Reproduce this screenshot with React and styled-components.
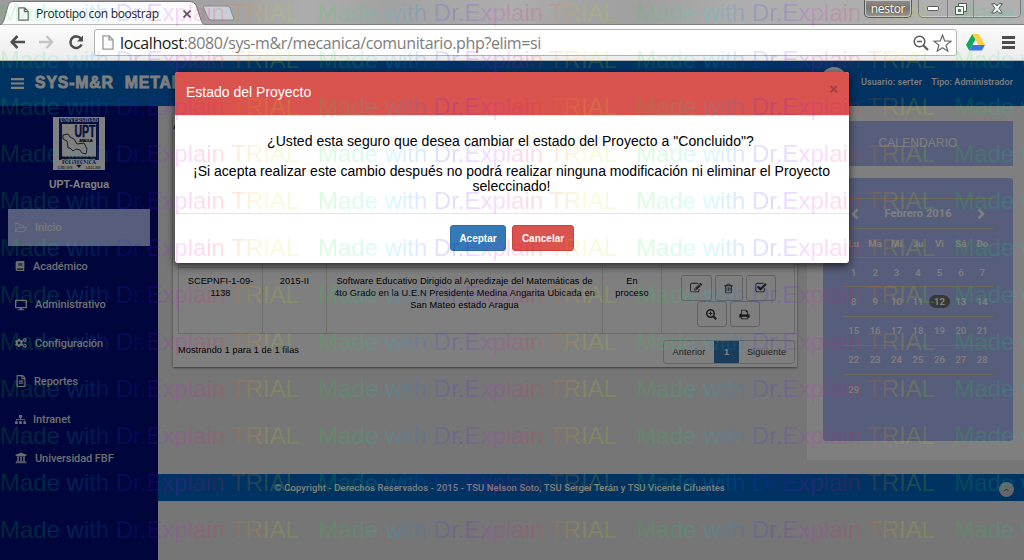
import React from "react";
import styled, { createGlobalStyle } from "styled-components";
import { FaBook, FaDesktop, FaCogs, FaRegFileAlt, FaSitemap, FaUniversity } from "react-icons/fa";

const Global = createGlobalStyle`
  * { box-sizing: border-box; }
  body { margin: 0; overflow: hidden; font-family: "Liberation Sans", Arial, sans-serif; }
  svg { display: block; flex: none; }
`;

const Page = styled.div`
  position: relative;
  width: 1024px;
  height: 560px;
  display: flex;
  flex-direction: column;
  overflow: hidden;
`;

/* ---------- browser chrome ---------- */
const TabStrip = styled.div`
  height: 25px;
  flex: none;
  display: flex;
  align-items: flex-start;
  justify-content: space-between;
  background: linear-gradient(100deg, #9c9c9c 0%, #a4a4a4 24%, #acacac 30%, #a2a2a2 38%, #adadad 50%, #a3a3a3 56%, #a0a0a0 63%, #adadad 72%, #b0b0b0 100%);
  border-bottom: 1px solid #7d7d7d;
`;
const Tabs = styled.div`
  position: relative;
  display: flex;
  height: 25px;
`;
const TabShape = styled.svg`
  position: absolute;
  left: 0;
  top: 0;
`;
const TabLabel = styled.div`
  position: relative;
  display: flex;
  align-items: center;
  width: 205px;
  height: 25px;
  padding: 2px 0 0 18px;
  font: 12px "Open Sans", sans-serif;
  letter-spacing: -0.33px;
  color: #222;
  span { flex: 1; margin-left: 7px; white-space: nowrap; }
  svg:last-child { margin-right: 14px; }
`;
const WindowControls = styled.div`
  display: flex;
  gap: 6px;
  padding-right: 3px;
`;
const UserBadge = styled.div`
  width: 48px;
  height: 18px;
  border: 1px solid #555;
  border-top: 0;
  border-radius: 0 0 5px 5px;
  background: linear-gradient(#8c8c8c, #777 50%, #999);
  box-shadow: inset 0 0 0 1px #c4c4c4;
  color: #fff;
  text-align: center;
  font: 12px/18px "Open Sans", sans-serif;
  letter-spacing: -0.3px;
  text-shadow: 0 0 2px #333;
`;
const ControlGroup = styled.div`
  display: flex;
  width: 103px;
  height: 18px;
  border: 1px solid #7b7b7b;
  border-top: 0;
  border-radius: 0 0 5px 5px;
  box-shadow: inset 0 -1px 0 #ccc;
`;
const Control = styled.div`
  width: ${(p) => p.$w}px;
  display: flex;
  align-items: center;
  justify-content: center;
  & + & { border-left: 1px solid #858585; }
`;
const Toolbar = styled.div`
  height: 36px;
  flex: none;
  display: flex;
  align-items: center;
  padding: 0 8px 0 10px;
  background: linear-gradient(#fbfbfb, #ececec);
  border-bottom: 1px solid #b5b5b5;
`;
const NavIcons = styled.div`
  display: flex;
  gap: 14px;
  width: 84px;
`;
const AddressBar = styled.div`
  display: flex;
  align-items: center;
  width: 863px;
  height: 27px;
  padding: 0 4px 0 7px;
  border: 1px solid #b3b3b3;
  border-radius: 3px;
  background: #fff;
`;
const Url = styled.div`
  flex: 1;
  margin-left: 6px;
  font: 16px/24px "Open Sans", sans-serif;
  letter-spacing: -0.37px;
  color: #7d7d7d;
  b { font-weight: 400; color: #1a1a1a; }
`;
const AddressActions = styled.div`
  display: flex;
  gap: 4px;
  align-items: center;
`;
const Extensions = styled.div`
  display: flex;
  align-items: center;
  justify-content: space-between;
  width: 49px;
  margin-left: 9px;
`;

/* ---------- site ---------- */
const Site = styled.div`
  position: relative;
  flex: 1;
  display: flex;
  flex-direction: column;
  background: #ececec;
`;
const SiteHeader = styled.header`
  height: 45px;
  flex: none;
  display: flex;
  align-items: center;
  padding: 0 11px;
  background: #0064c4;
  color: #fff;
`;
const Brand = styled.div`
  flex: 1;
  display: flex;
  gap: 11px;
  margin: -1px 0 0 11px;
  font: 900 15.8px "Liberation Sans", Arial, sans-serif;
  letter-spacing: 0.85px;
  -webkit-text-stroke: 0.8px #fff;
`;
const Avatar = styled.div`
  width: 26px;
  height: 26px;
  border-radius: 50%;
  background: #fff;
  margin: 0 14px 7px 0;
`;
const UserInfo = styled.div`
  display: flex;
  justify-content: space-between;
  width: 152px;
  margin-top: -3px;
  font: 500 9px Roboto, sans-serif;
  letter-spacing: 0.1px;
  white-space: nowrap;
`;
const SiteBody = styled.div`
  flex: 1;
  display: flex;
  min-height: 0;
`;
const Sidebar = styled.aside`
  width: 158px;
  padding: 11px 8px;
  background: #000c78;
`;
const Institution = styled.div`
  display: flex;
  flex-direction: column;
  align-items: center;
  height: 92px;
  gap: 8px;
  color: #fff;
  font: 700 10.5px "Liberation Sans", Arial, sans-serif;
`;
const MenuItem = styled.div`
  display: flex;
  align-items: center;
  gap: ${(p) => p.$gap}px;
  height: 37px;
  margin-bottom: 1.35px;
  padding: ${(p) => (p.$active ? 0 : 1)}px 0 0 7px;
  background: ${(p) => (p.$active ? "#aebcf6" : "transparent")};
  color: ${(p) => (p.$active ? "#f4f4f4" : "#dcdcdc")};
  font: 500 11px Roboto, sans-serif;
  letter-spacing: -0.08px;
`;
const Main = styled.div`
  flex: 1;
  display: flex;
  flex-direction: column;
`;
const Columns = styled.div`
  height: 368px;
  display: flex;
  align-items: flex-start;
  justify-content: space-between;
  padding-left: 15px;
`;
const Card = styled.section`
  width: 624px;
  height: 253px;
  margin-top: 8px;
  padding: 0 2px 0 5px;
  background: #fff;
  box-shadow: 0 1px 2px rgba(0, 0, 0, 0.5);
`;
const CardTitle = styled.h2`
  height: 23px;
  margin: 0 0 0 -5px;
  font: 15px/20px "Liberation Sans", Arial, sans-serif;
  color: #205090;
`;
const CardBar = styled.div`
  height: 25px;
  margin: 0 -2px 0 -3px;
  background: #aebcf6;
`;
const Table = styled.div`
  display: grid;
  grid-template-columns: 84px 64px 276px 59px 132px;
  grid-template-rows: 14px 66px;
  width: 617px;
  margin-top: 91px;
  border: solid #d4d4d4;
  border-width: 0 1px 1px 1px;
`;
const Cell = styled.div`
  padding: 7px 4px 0;
  border-top: 1px solid #d4d4d4;
  border-right: 1px solid #d8d8d8;
  text-align: center;
  font: 9.2px/12px "Liberation Sans", Arial, sans-serif;
  letter-spacing: 0.1px;
  color: #000;
  white-space: pre-line;
  &:nth-child(5n) { border-right: 0; }
`;
const Actions = styled.div`
  display: flex;
  flex-wrap: wrap;
  justify-content: center;
  gap: 0 3px;
  width: 97px;
  margin: 0 auto;
`;
const ActionButton = styled.span`
  display: flex;
  align-items: center;
  justify-content: center;
  width: ${(p) => p.$w}px;
  height: 26px;
  border: 1px solid #c4c4c4;
  border-radius: 3px;
  color: #333;
`;
const TableFooter = styled.div`
  display: flex;
  justify-content: space-between;
  padding-top: 5px;
  font: 9.2px/22px "Liberation Sans", Arial, sans-serif;
  letter-spacing: 0.07px;
  color: #000;
`;
const Pager = styled.div`
  display: flex;
  height: 24px;
  border: 1px solid #ccc;
  border-radius: 3px;
  color: #444;
  font-size: 9.2px;
  line-height: 23px;
  letter-spacing: 0.1px;
  margin-top: 1px;
`;
const PageLink = styled.span`
  width: ${(p) => p.$w}px;
  text-align: center;
  ${(p) => p.$on && "background:#337ab7;color:#fff;font-weight:700;"}
`;
const Aside = styled.aside`
  width: 217px;
  height: 354px;
  padding: 15px 11px 0 16px;
  background: #fff;
`;
const AsideTitle = styled.div`
  height: 45px;
  margin-bottom: 12px;
  background: #aebcf6;
  color: #fff;
  text-align: center;
  font: 12px/44px "Liberation Sans", Arial, sans-serif;
  letter-spacing: 0.1px;
`;
const Calendar = styled.div`
  height: 263px;
  padding: 20px 20px 0;
  border-radius: 3px;
  background: #aebcf6;
  color: #fff;
`;
const MonthRow = styled.div`
  display: flex;
  align-items: center;
  justify-content: space-between;
  height: 30px;
  padding: 0 8px;
  border-top: 1px solid #d8d0b8;
  font: 700 11px Roboto, sans-serif;
  letter-spacing: 0.1px;
`;
const Week = styled.div`
  display: grid;
  grid-template-columns: repeat(7, 1fr);
  align-items: center;
  height: 29.2px;
  border-top: 1px solid #d8d0b8;
  text-align: center;
  font: ${(p) => (p.$head ? 700 : 500)} 9.6px Roboto, sans-serif;
`;
const Day = styled.span`
  margin: 0 ${(p) => (p.$today ? 0 : -2)}px;
  line-height: 13px;
  ${(p) => p.$today && "background:#707070;border-radius:7px;font-weight:700;"}
`;
const Footer = styled.footer`
  display: flex;
  align-items: center;
  height: 27px;
  padding-right: 10px;
  background: #0064c4;
  color: #fff;
  font: 500 9.4px Roboto, sans-serif;
  letter-spacing: 0.14px;
  span { flex: 1; text-align: center; padding-right: 158px; }
`;
const ToTop = styled.div`
  display: flex;
  align-items: center;
  justify-content: center;
  width: 15px;
  height: 15px;
  margin-top: 4px;
  border-radius: 50%;
  background: #c9c9d2;
`;

/* ---------- dialog ---------- */
const Backdrop = styled.div`
  position: absolute;
  inset: 0;
  background: rgba(0, 0, 0, 0.5);
`;
const Dialog = styled.div`
  position: absolute;
  left: 175px;
  top: 11px;
  width: 674px;
  height: 191px;
  display: flex;
  flex-direction: column;
  border-radius: 3px;
  background: #fff;
  box-shadow: 0 3px 9px rgba(0, 0, 0, 0.7);
  overflow: hidden;
`;
const DialogHeader = styled.div`
  display: flex;
  align-items: center;
  justify-content: space-between;
  height: 44px;
  padding: 0 11px 4px;
  background: #d9534f;
  border-bottom: 1px solid #e5e5e5;
  color: #fff;
  font-size: 14px;
`;
const Close = styled.span`
  margin-top: -7px;
  color: #a03d3a;
  font-weight: 700;
  font-size: 15px;
`;
const DialogBody = styled.div`
  height: 98px;
  padding: 18px 15px 0;
  border-bottom: 1px solid #e5e5e5;
  text-align: center;
  font-size: 14px;
  line-height: 15px;
  letter-spacing: 0.02px;
  color: #000;
  p { margin: 0 0 15px -1px; white-space: pre-line; }
  p:first-child { letter-spacing: 0.05px; margin-left: -3px; }
`;
const DialogFooter = styled.div`
  display: flex;
  justify-content: center;
  gap: 6px;
  padding-top: 11px;
`;
const Button = styled.button`
  width: ${(p) => p.$w}px;
  height: 26px;
  padding: 0;
  border: 1px solid ${(p) => p.$edge};
  border-radius: 3px;
  background: ${(p) => p.$bg};
  color: #fff;
  font: 700 10px "Liberation Sans", Arial, sans-serif;
`;

/* ---------- trial watermark ---------- */
const Watermark = styled.div`
  position: absolute;
  inset: 0;
  overflow: hidden;
  pointer-events: none;
  opacity: 0.14;
`;
const WatermarkLine = styled.div`
  width: 1272px;
  height: 47px;
  font: 24px/26px "Liberation Sans", Arial, sans-serif;
  letter-spacing: -0.025px;
  white-space: pre;
  color: transparent;
  background: repeating-linear-gradient(90deg, #00f020 0px, #00f050 30px, #00e8f0 66px, #0080ff 100px, #4000ff 140px, #e000ff 175px, #ff0050 215px, #ff7000 238px, #ffd800 265px, #80f800 298px, #00f020 318px);
  -webkit-background-clip: text;
  background-clip: text;
`;

const paths = {
  edit: "M888 1184l116-116-152-152-116 116v56h96v96h56zm440-720q-16-16-33 1l-350 350q-17 17-1 33t33-1l350-350q17-17 1-33zm80 594v190q0 119-84.5 203.5t-203.5 84.5h-832q-119 0-203.5-84.5t-84.5-203.5v-832q0-119 84.5-203.5t203.5-84.5h832q63 0 117 25 15 7 18 23 3 17-9 29l-49 49q-14 14-32 8-23-6-45-6h-832q-66 0-113 47t-47 113v832q0 66 47 113t113 47h832q66 0 113-47t47-113v-126q0-13 9-22l64-64q15-15 35-7t20 29zm-96-738l288 288-672 672h-288v-288zm444 132l-92 92-288-288 92-92q28-28 68-28t68 28l152 152q28 28 28 68t-28 68z",
  trash: "M704 736v576q0 14-9 23t-23 9h-64q-14 0-23-9t-9-23v-576q0-14 9-23t23-9h64q14 0 23 9t9 23zm256 0v576q0 14-9 23t-23 9h-64q-14 0-23-9t-9-23v-576q0-14 9-23t23-9h64q14 0 23 9t9 23zm256 0v576q0 14-9 23t-23 9h-64q-14 0-23-9t-9-23v-576q0-14 9-23t23-9h64q14 0 23 9t9 23zm128 724v-948h-896v948q0 22 7 40.5t14.5 27 10.5 8.5h832q3 0 10.5-8.5t14.5-27 7-40.5zm-672-1076h448l-48-117q-7-9-17-11h-317q-10 2-17 11zm928 32v64q0 14-9 23t-23 9h-96v948q0 83-47 143.5t-113 60.5h-832q-66 0-113-58.5t-47-141.5v-952h-96q-14 0-23-9t-9-23v-64q0-14 9-23t23-9h309l70-167q15-37 54-63t79-26h320q40 0 79 26t54 63l70 167h309q14 0 23 9t9 23z",
  check: "M1472 930v318q0 119-84.5 203.5t-203.5 84.5h-832q-119 0-203.5-84.5t-84.5-203.5v-832q0-119 84.5-203.5t203.5-84.5h832q63 0 117 25 15 7 18 23 3 17-9 29l-49 49q-10 10-23 10-3 0-9-2-23-6-45-6h-832q-66 0-113 47t-47 113v832q0 66 47 113t113 47h832q66 0 113-47t47-113v-254q0-13 9-22l64-64q10-10 23-10 6 0 12 3 20 8 20 29zm231-489l-814 814q-24 24-57 24t-57-24l-430-430q-24-24-24-57t24-57l110-110q24-24 57-24t57 24l263 263 647-647q24-24 57-24t57 24l110 110q24 24 24 57t-24 57z",
  print: "M448 1536h896v-256h-896v256zm0-640h896v-384h-160q-40 0-68-28t-28-68v-160h-640v640zm1152 64q0-26-19-45t-45-19-45 19-19 45 19 45 45 19 45-19 19-45zm128 0v416q0 13-9.5 22.5t-22.5 9.5h-224v160q0 40-28 68t-68 28h-960q-40 0-68-28t-28-68v-160h-224q-13 0-22.5-9.5t-9.5-22.5v-416q0-79 56.5-135.5t135.5-56.5h64v-544q0-40 28-68t68-28h672q40 0 88 20t76 48l152 152q28 28 48 76t20 88v256h64q79 0 135.5 56.5t56.5 135.5z",
  folder: "M1717 931q0-35-53-35h-1088q-40 0-85.5 21.5t-71.5 52.5l-294 363q-18 24-18 40 0 35 53 35h1088q40 0 86-22t71-53l294-363q18-22 18-39zm-1141-163h768v-160q0-40-28-68t-68-28h-576q-40 0-68-28t-28-68v-64q0-40-28-68t-68-28h-320q-40 0-68 28t-28 68v853l256-315q44-53 116-87.5t140-34.5zm1269 163q0 62-46 120l-295 363q-43 53-116 87.5t-140 34.5h-1088q-92 0-158-66t-66-158v-960q0-92 66-158t158-66h320q92 0 158 66t66 158v32h544q92 0 158 66t66 158v160h192q54 0 99 24.5t67 70.5q15 32 15 68z",
};
const Glyph = ({ name, size = 12, box = 1792 }) => (
  <svg width={size} height={size} viewBox={`0 0 ${box} 1792`} fill="currentColor">
    <path d={paths[name]} />
  </svg>
);
const ZoomPlus = () => (
  <svg width="11" height="11" viewBox="0 0 11 11" fill="none" stroke="currentColor" strokeWidth="1.5">
    <circle cx="4.5" cy="4.5" r="3.7" />
    <path d="M7.3 7.3L10.2 10.2" strokeWidth="2" />
    <path d="M4.5 2.7V6.3M2.7 4.5H6.3" strokeWidth="1.1" />
  </svg>
);
const Chevron = ({ d }) => (
  <svg width="8" height="12" viewBox="0 0 8 12" fill="none" stroke="currentColor" strokeWidth="2.6"><path d={d} /></svg>
);
const PageGlyph = ({ w, h, color }) => (
  <svg width={w} height={h} viewBox="0 0 11 14" fill="#fafafa" stroke={color} strokeWidth="1.2">
    <path d="M.8 .8H6.6L10.2 4.4V13.2H.8ZM6.4 .8V4.6H10.2" />
  </svg>
);
const Logo = () => (
  <svg width="52" height="53" viewBox="0 0 52 53">
    <rect width="52" height="53" fill="#fff" />
    <path d="M6 1H46V43H33L26 51L19 43H6Z" fill="#13247c" />
    <rect x="9" y="7" width="34" height="33" fill="#fff" />
    <g fontFamily="Liberation Serif, serif" fontWeight="700" textAnchor="middle">
      <text x="26" y="5.4" fontSize="5.6" textLength="38" fill="#fff">UNIVERSIDAD</text>
      <text x="26" y="47" fontSize="5.6" textLength="34" fill="#13247c" stroke="#fff" strokeWidth="1.6" paintOrder="stroke">POLITECNICA</text>
      <text x="12" y="52" fontSize="3.6" textLength="15" lengthAdjust="spacingAndGlyphs" fill="#333">12 DIC 1976</text>
      <text x="40" y="52" fontSize="3.6" textLength="15" lengthAdjust="spacingAndGlyphs" fill="#333">A.B.I.L 2010</text>
    </g>
    <text x="32" y="20" fontFamily="Liberation Sans, sans-serif" fontWeight="700" fontSize="16" textLength="21" lengthAdjust="spacingAndGlyphs" textAnchor="middle" fill="#13247c" stroke="#13247c" strokeWidth=".5">UPT</text>
    <text x="33" y="25" fontFamily="Liberation Sans, sans-serif" fontWeight="700" fontSize="4" textLength="14" textAnchor="middle">ARAGUA</text>
    <path d="M10 18L15 17L17 20L21 22L24 27L31 26L34 32L33 37L29 36L27 33L23 32L20 34L17 31L15 31L14 24L10 22Z" fill="#fff" stroke="#222" strokeWidth=".9" />
    <path d="M9 40.5H43" stroke="#222" strokeWidth="2.2" strokeDasharray="3 .7" />
  </svg>
);

const menu = [
  ["Inicio", <Glyph name="folder" size={12} box={1920} />, 8],
  ["Académico", <FaBook size={10} />, 8],
  ["Administrativo", <FaDesktop size={12} />, 8],
  ["Configuración", <FaCogs size={12} />, 8],
  ["Reportes", <FaRegFileAlt size={12} />, 7],
  ["Intranet", <FaSitemap size={11} />, 7],
  ["Universidad FBF", <FaUniversity size={12} />, 8],
];
const weeks = [
  [1, 2, 3, 4, 5, 6, 7],
  [8, 9, 10, 11, 12, 13, 14],
  [15, 16, 17, 18, 19, 20, 21],
  [22, 23, 24, 25, 26, 27, 28],
  [29],
];

function Browser() {
  return (
    <>
      <TabStrip>
        <Tabs>
          <TabShape width="240" height="25" viewBox="0 0 240 25">
            <path d="M203 6H227Q229 6 230 8L234 19Q234 20 232 20H212Q209 20 208 18Z" fill="#c9ced6" stroke="#8b8b8b" />
            <path d="M0 25Q3 24 4 20L8 6Q9 1.500 12 1.500H190Q194 1.500 196 5L201 20Q202 24.500 206 25Z" fill="#fbfbfb" stroke="#777" />
          </TabShape>
          <TabLabel>
            <PageGlyph w={11} h={14} color="#666" />
            <span>Prototipo con boostrap</span>
            <svg width="8" height="8" viewBox="0 0 8 8" stroke="#555" strokeWidth="1.6"><path d="M.5 .5L7.500 7.500M7.500 .5L.5 7.500" /></svg>
          </TabLabel>
        </Tabs>
        <WindowControls>
          <UserBadge>nestor</UserBadge>
          <ControlGroup>
            <Control $w={28}>
              <svg width="12" height="5" viewBox="0 0 12 5"><rect x=".5" y=".5" width="11" height="4" rx="1" fill="#fff" stroke="#555" /></svg>
            </Control>
            <Control $w={27}>
              <svg width="12" height="12" viewBox="0 0 12 12" fill="#fff" stroke="#555"><path d="M3.500 .5H11.500V8.500H3.500Z" /><path d="M.5 3.500H8.500V11.500H.5Z" /><path d="M3.500 6.500H5.500V8.500H3.500Z" fill="#999" /></svg>
            </Control>
            <Control $w={47}>
              <svg width="12" height="11" viewBox="0 0 12 11"><path d="M.7 .7H4L6 3L8 .7H11.300L8 5.300L11.300 10H8L6 7.600L4 10H.7L4 5.300Z" fill="#fff" stroke="#555" /></svg>
            </Control>
          </ControlGroup>
        </WindowControls>
      </TabStrip>
      <Toolbar>
        <NavIcons>
          <svg width="15" height="14" viewBox="0 0 15 14" fill="none" stroke="#4c4c4c" strokeWidth="2.6"><path d="M7.500 1L1.800 7L7.500 13M2 7H15" /></svg>
          <svg width="15" height="14" viewBox="0 0 15 14" fill="none" stroke="#c4c4c4" strokeWidth="2.4"><path d="M7.500 1L13.200 7L7.500 13M13 7H0" /></svg>
          <svg width="16" height="15" viewBox="0 0 16 15" fill="none" stroke="#4c4c4c" strokeWidth="2.500"><path d="M13 3.800A5.800 5.800 0 1 0 13.600 9.500" /><path d="M15 .5V6.600H9Z" fill="#4c4c4c" stroke="none" /></svg>
        </NavIcons>
        <AddressBar>
          <PageGlyph w={12} h={15} color="#999" />
          <Url><b>localhost</b>:8080/sys-m&amp;r/mecanica/comunitario.php?elim=si</Url>
          <AddressActions>
            <svg width="16" height="16" viewBox="0 0 16 16" fill="none" stroke="#5a5a5a" strokeWidth="1.500"><circle cx="6.500" cy="6.500" r="5.300" /><path d="M10.500 10.500L15 15" strokeWidth="2.200" /><path d="M4 6.500H9" /></svg>
            <svg width="19" height="18" viewBox="0 0 19 18" fill="#fff" stroke="#666" strokeWidth="1.200"><path d="M9.500 1L11.700 6.900L18 7.200L13.100 11.100L14.800 17.200L9.500 13.700L4.200 17.200L5.900 11.100L1 7.200L7.300 6.900Z" /></svg>
          </AddressActions>
        </AddressBar>
        <Extensions>
          <svg width="19" height="17" viewBox="0 0 19 17"><path d="M6.300 0L0 11L3.200 16.500L9.500 5.600Z" fill="#0da960" /><path d="M6.300 0H12.700L19 11H12.600Z" fill="#ffcf48" /><path d="M6.300 11H19L15.800 16.500H3.200Z" fill="#3a77e8" /></svg>
          <svg width="13" height="13" viewBox="0 0 13 13" stroke="#4c4c4c" strokeWidth="3"><path d="M0 1.500H13M0 6.500H13M0 11.500H13" /></svg>
        </Extensions>
      </Toolbar>
    </>
  );
}

export default function App() {
  return (
    <Page>
      <Global />
      <Browser />
      <Site>
        <SiteHeader>
          <svg width="13" height="11" viewBox="0 0 13 11" stroke="currentColor" strokeWidth="2.2"><path d="M0 1.200H13M0 5.500H13M0 9.800H13" /></svg>
          <Brand><span>SYS-M&amp;R</span><span>METAL</span></Brand>
          <Avatar />
          <UserInfo><span>Usuario: serter</span><span>Tipo: Administrador</span></UserInfo>
        </SiteHeader>
        <SiteBody>
          <Sidebar>
            <Institution><Logo />UPT-Aragua</Institution>
            {menu.map(([label, icon, gap], i) => (
              <MenuItem key={label} $active={i === 0} $gap={gap}>{icon}{label}</MenuItem>
            ))}
          </Sidebar>
          <Main>
            <Columns>
              <Card>
                <CardTitle>A</CardTitle>
                <CardBar />
                <Table>
                  <Cell /><Cell /><Cell /><Cell /><Cell />
                  <Cell>{"SCEPNFI-1-09-\n1138"}</Cell>
                  <Cell>2015-II</Cell>
                  <Cell>{"Software Educativo Dirigido al Apredizaje del Matemáticas de\n4to Grado en la U.E.N Presidente Medina Angarita Ubicada en\nSan Mateo estado Aragua"}</Cell>
                  <Cell>{"En\nproceso"}</Cell>
                  <Cell>
                    <Actions>
                      <ActionButton $w={31}><Glyph name="edit" size={12} /></ActionButton>
                      <ActionButton $w={28}><Glyph name="trash" size={11} /></ActionButton>
                      <ActionButton $w={30}><Glyph name="check" size={12} /></ActionButton>
                      <ActionButton $w={30}><ZoomPlus /></ActionButton>
                      <ActionButton $w={30}><Glyph name="print" size={11} /></ActionButton>
                    </Actions>
                  </Cell>
                </Table>
                <TableFooter>
                  <span>Mostrando 1 para 1 de 1 filas</span>
                  <Pager>
                    <PageLink $w={50}>Anterior</PageLink>
                    <PageLink $w={25} $on>1</PageLink>
                    <PageLink $w={55}>Siguiente</PageLink>
                  </Pager>
                </TableFooter>
              </Card>
              <Aside>
                <AsideTitle>CALENDARIO</AsideTitle>
                <Calendar>
                  <MonthRow><Chevron d="M6.500 1.500L2 6L6.500 10.500" />Febrero 2016<Chevron d="M1.500 1.500L6 6L1.500 10.500" /></MonthRow>
                  <Week $head>{["Lu", "Ma", "Mi", "Ju", "Vi", "Sá", "Do"].map((d) => <Day key={d}>{d}</Day>)}</Week>
                  {weeks.map((w) => (
                    <Week key={w[0]}>{w.map((d) => <Day key={d} $today={d === 12}>{d}</Day>)}</Week>
                  ))}
                </Calendar>
              </Aside>
            </Columns>
            <Footer>
              <span>© Copyright - Derechos Reservados - 2015 - TSU Nelson Soto, TSU Sergei Terán y TSU Vicente Cifuentes</span>
              <ToTop><svg width="5" height="4" viewBox="0 0 5 4" fill="none" stroke="#333"><path d="M.5 3L2.500 1L4.500 3" /></svg></ToTop>
            </Footer>
          </Main>
        </SiteBody>
        <Backdrop />
        <Dialog>
          <DialogHeader><span>Estado del Proyecto</span><Close>×</Close></DialogHeader>
          <DialogBody>
            <p>¿Usted esta seguro que desea cambiar el estado del Proyecto a "Concluido"?</p>
            <p>{"¡Si acepta realizar este cambio después no podrá realizar ninguna modificación ni eliminar el Proyecto\nseleccinado!"}</p>
          </DialogBody>
          <DialogFooter>
            <Button $w={56} $bg="#337ab7" $edge="#2e6da4">Aceptar</Button>
            <Button $w={62} $bg="#d9534f" $edge="#d43f3a">Cancelar</Button>
          </DialogFooter>
        </Dialog>
      </Site>
      <Watermark>
        {Array.from({ length: 12 }, (_, i) => (
          <WatermarkLine key={i}>{"Made with Dr.Explain TRIAL   ".repeat(4)}</WatermarkLine>
        ))}
      </Watermark>
    </Page>
  );
}
